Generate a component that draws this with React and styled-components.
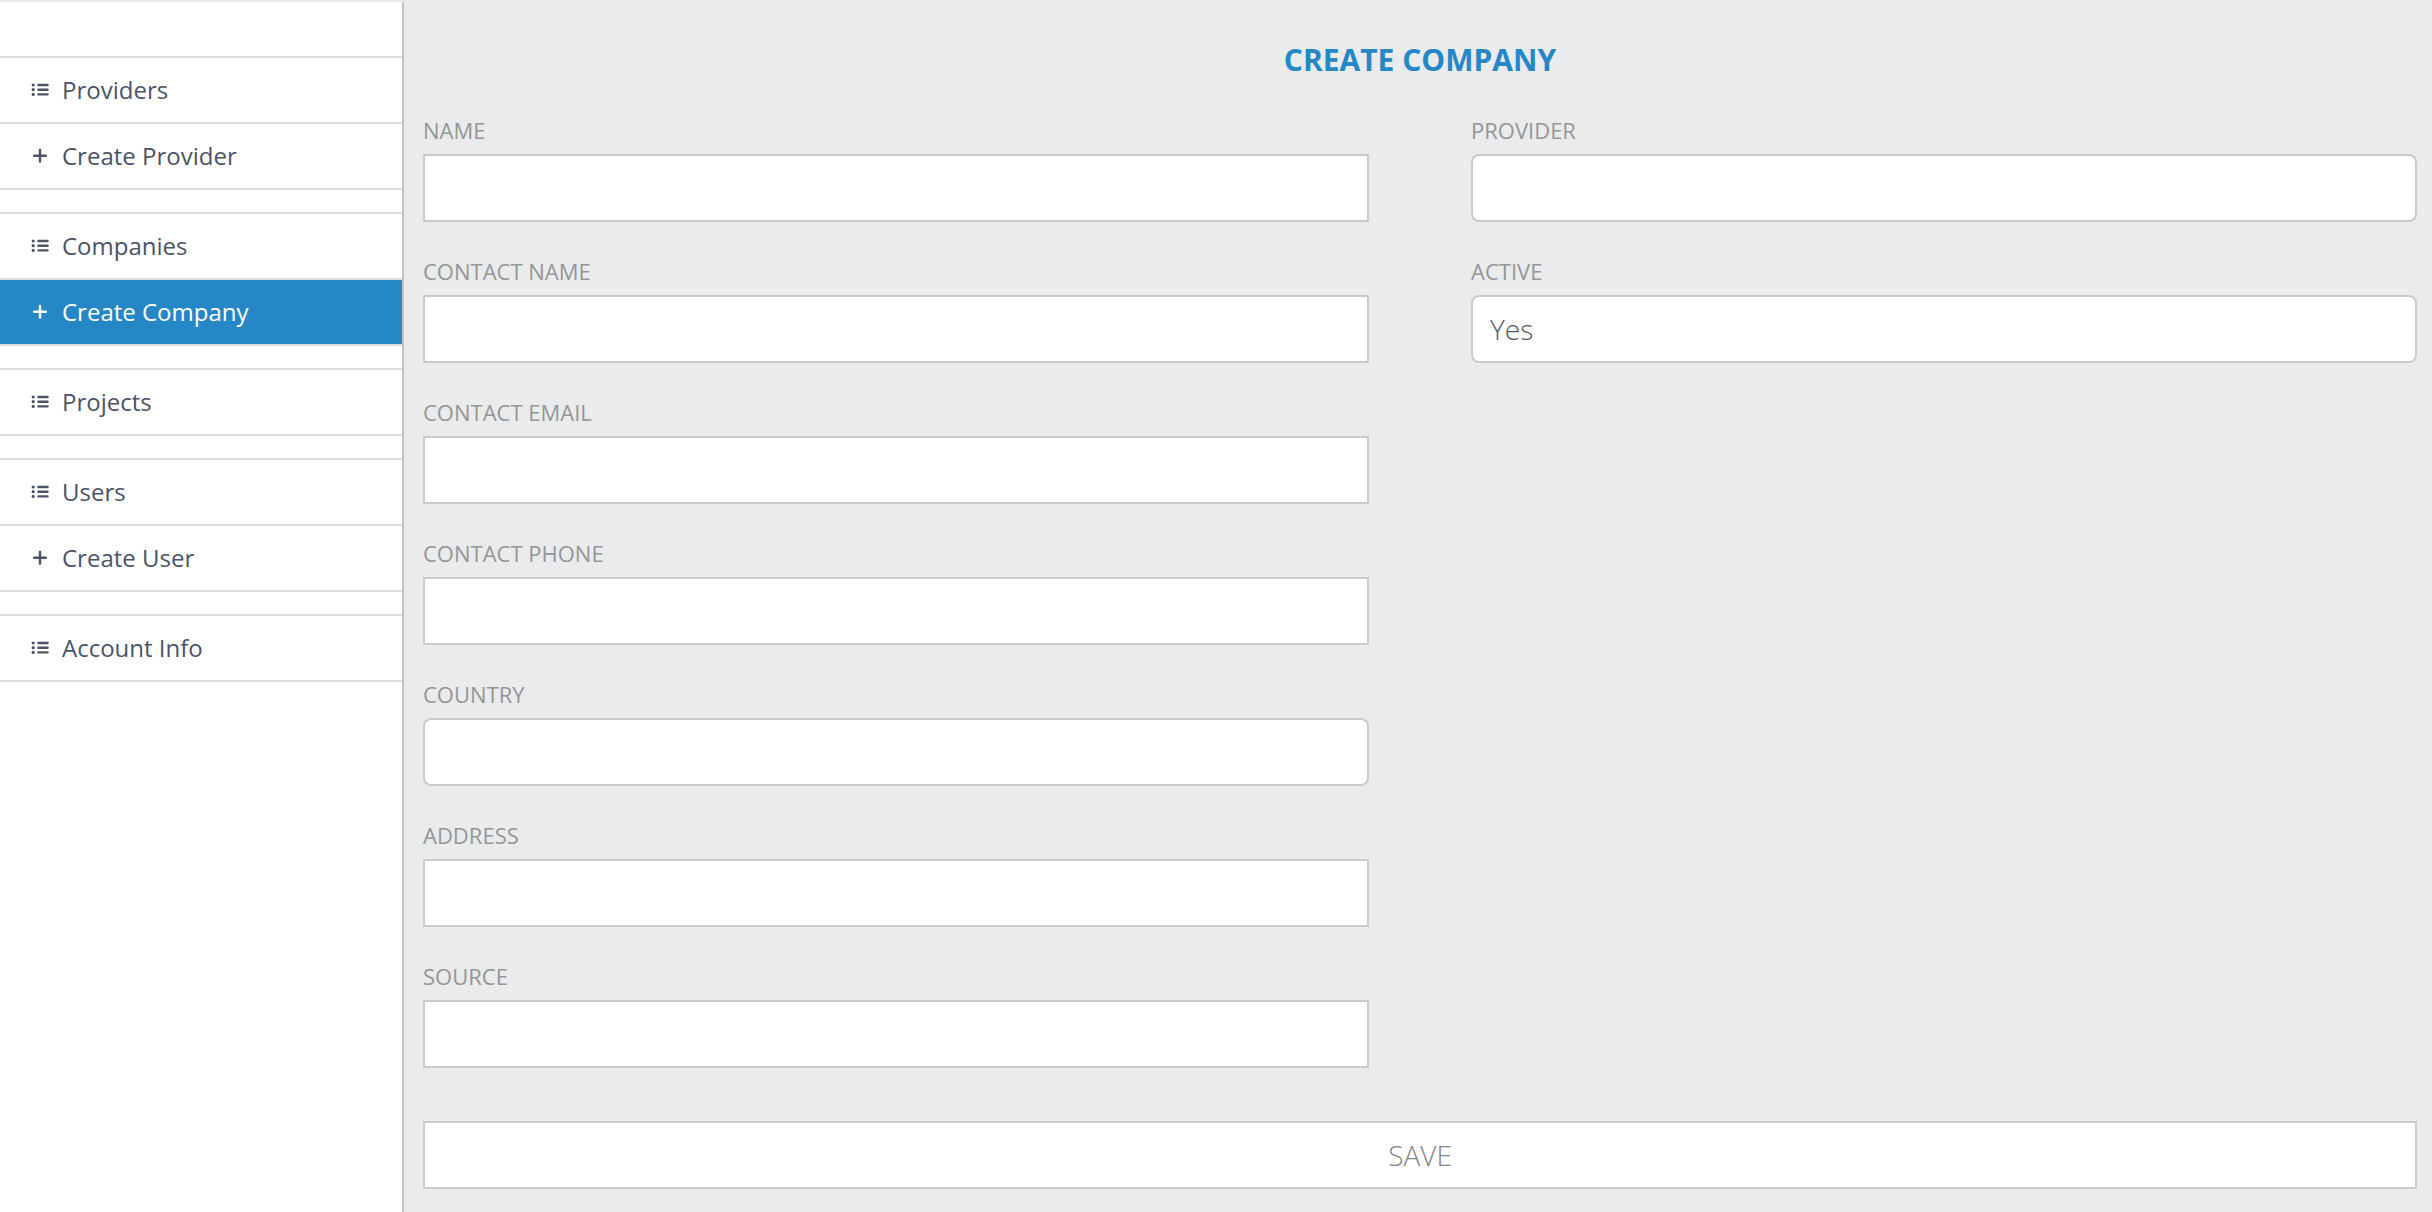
import React, { useState } from 'react';
import styled, { createGlobalStyle } from 'styled-components';

const GlobalStyle = createGlobalStyle`
  *, *::before, *::after {
    box-sizing: border-box;
  }

  body {
    margin: 0;
    background-color: #e9ebec;
    font-family: "Open Sans", sans-serif;
  }
`
const Page = styled.div`
  display: flex;
  min-height: 100vh;
  border-top: 2px solid #ebebeb;
`
const Sidebar = styled.nav`
  display: flex;
  flex-direction: column;
  flex: 0 0 404px;
  gap: 22px;
  padding-top: 54px;
  border-right: 2px solid #c2c4c7;
  background-color: #fff;
`
const Group = styled.ul`
  margin: 0;
  padding: 0;
  list-style: none;
  border-top: 2px solid #dcdcdc;
`
const Item = styled.li`
  border-bottom: 2px solid #dcdcdc;
`
const ItemLink = styled.a`
  display: flex;
  align-items: center;
  gap: 12px;
  height: 64px;
  padding-left: 30px;
  background-color: ${props => props.$active ? '#2687c7' : '#fff'};
  color: ${props => props.$active ? '#fff' : '#4b5468'};
  font-size: 24px;
  line-height: 32px;
  text-decoration: none;
`
const Icon = styled.svg`
  width: 20px;
  height: 20px;
  fill: currentColor;
`
const Main = styled.main`
  flex: 1;
  min-width: 0;
  padding: 37px 15px 23px 19px;
`
const Title = styled.h1`
  margin: 0 0 35px;
  color: #2687c7;
  font-size: 30px;
  font-weight: 700;
  line-height: 42px;
  text-align: center;
  text-transform: uppercase;
`
const Columns = styled.div`
  display: grid;
  grid-template-columns: 1fr 1fr;
  column-gap: 102px;
  align-items: start;
`
const Column = styled.div`
  display: grid;
  row-gap: 35px;
`
const FieldBox = styled.div`
  display: flex;
  flex-direction: column;
  gap: 10px;
`
const Label = styled.label`
  color: #969696;
  font-size: 22px;
  line-height: 28px;
  text-transform: uppercase;
`
const Input = styled.input`
  width: 100%;
  height: 68px;
  padding: 0 17px;
  border: 2px solid #cacaca;
  border-radius: 0;
  background-color: #fff;
  color: #555c68;
  font-family: inherit;
  font-size: 28px;
  font-weight: 300;
`
const Select = styled(Input).attrs({ as: 'select' })`
  appearance: none;
  border-radius: 8px;
`
const SaveButton = styled.button`
  display: block;
  width: 100%;
  height: 68px;
  margin-top: 53px;
  border: 2px solid #cacaca;
  background-color: #fff;
  color: #858585;
  font-family: inherit;
  font-size: 28px;
  font-weight: 300;
  text-transform: uppercase;
`

const ListIcon = () => (
  <Icon viewBox="0 0 20 20" aria-hidden="true">
    {[5, 9.7, 14.4].map(y => (
      <React.Fragment key={y}>
        <circle cx="3.2" cy={y} r="1.6" />
        <rect x="7.3" y={y - 1.2} width="11.4" height="2.4" rx="1" />
      </React.Fragment>
    ))}
  </Icon>
);

const PlusIcon = () => (
  <Icon viewBox="0 0 20 20" aria-hidden="true">
    <rect x="3" y="8.6" width="14" height="2.4" rx="1" />
    <rect x="8.8" y="2.8" width="2.4" height="14" rx="1" />
  </Icon>
);

const menu = [
  [
    { label: 'Providers', icon: ListIcon },
    { label: 'Create Provider', icon: PlusIcon },
  ],
  [
    { label: 'Companies', icon: ListIcon },
    { label: 'Create Company', icon: PlusIcon, active: true },
  ],
  [
    { label: 'Projects', icon: ListIcon },
  ],
  [
    { label: 'Users', icon: ListIcon },
    { label: 'Create User', icon: PlusIcon },
  ],
  [
    { label: 'Account Info', icon: ListIcon },
  ],
];

const companyFields = [
  { name: 'name', label: 'Name' },
  { name: 'contact_name', label: 'Contact name' },
  { name: 'contact_email', label: 'Contact email', type: 'email' },
  { name: 'contact_phone', label: 'Contact phone', type: 'tel' },
  { name: 'country', label: 'Country', options: [''] },
  { name: 'address', label: 'Address' },
  { name: 'source', label: 'Source' },
];

const settingFields = [
  { name: 'provider', label: 'Provider', options: [''] },
  { name: 'active', label: 'Active', options: ['Yes', 'No'] },
];

const Field = ({ name, label, type = 'text', options, value, onChange }) => {
  const props = {
    id: name,
    name,
    value,
    onChange: (e) => onChange(name, e.target.value)
  };

  return (
    <FieldBox>
      <Label htmlFor={name}>{label}</Label>
      {options ? (
        <Select {...props}>
          {options.map(option => <option key={option} value={option}>{option}</option>)}
        </Select>
      ) : (
        <Input type={type} {...props} />
      )}
    </FieldBox>
  );
};

const App = () => {
  const [values, setValues] = useState({ active: 'Yes' });

  const handleChange = (name, value) => setValues({ ...values, [name]: value });

  const renderField = (field) => (
    <Field
      key={field.name}
      {...field}
      value={values[field.name] || ''}
      onChange={handleChange}
    />
  );

  return (
    <Page>
      <GlobalStyle />
      <Sidebar>
        {menu.map((items, index) => (
          <Group key={index}>
            {items.map(({ label, icon: ItemIcon, active }) => (
              <Item key={label}>
                <ItemLink href="#" $active={active} aria-current={active ? 'page' : undefined}>
                  <ItemIcon />
                  {label}
                </ItemLink>
              </Item>
            ))}
          </Group>
        ))}
      </Sidebar>
      <Main>
        <Title>Create company</Title>
        <form onSubmit={(e) => e.preventDefault()}>
          <Columns>
            <Column>{companyFields.map(renderField)}</Column>
            <Column>{settingFields.map(renderField)}</Column>
          </Columns>
          <SaveButton type="submit">Save</SaveButton>
        </form>
      </Main>
    </Page>
  );
};

export default App;
